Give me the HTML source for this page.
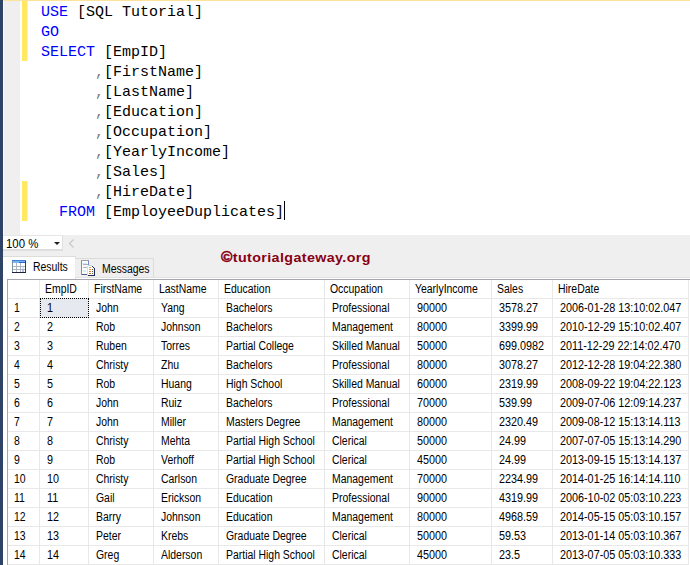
<!DOCTYPE html>
<html><head><meta charset="utf-8"><style>
*{margin:0;padding:0;box-sizing:border-box}
html,body{width:690px;height:565px;overflow:hidden;background:#fff}
body{position:relative;font-family:"Liberation Sans",sans-serif}
.abs{position:absolute}
#lstrip{left:0;top:0;width:3px;height:565px;background:#2f4367}
#wline{left:3px;top:1px;width:1px;height:234px;background:#fafafa}
#topline{left:3px;top:0;width:687px;height:1px;background:#fde39a}
#margin{left:4px;top:1px;width:16px;height:234px;background:#efefef}
.ybar{left:22px;width:5px;background:#ffe862;border-right:1px solid #fff3b0;width:6px}
.cl{position:absolute;left:41px;height:20px;margin-top:2px;font-family:"Liberation Mono",monospace;font-size:15px;line-height:20px;white-space:pre;color:#000}
.k{color:#0000ff}.g{color:#808080}
#cursor{left:284px;top:201px;width:1px;height:19px;background:#000}
#zoombar{left:3px;top:235px;width:687px;height:22px;background:#efefef}
#zoombox{left:3px;top:235px;width:60px;height:16px;background:#fff;border-top:1px solid #e6e6e6;border-right:1px solid #e0e0e0;border-bottom:2px solid #dedede}
#zoomtxt{left:6px;top:237px;font-size:12px;line-height:14px;color:#000;transform:scaleX(0.95);transform-origin:0 0;white-space:nowrap}
#ddarrow{left:54px;top:242px;width:0;height:0;border-left:3px solid transparent;border-right:3px solid transparent;border-top:3px solid #1e1e1e}
#panel{left:3px;top:257px;width:687px;height:308px;background:#fff}
#tabbar{left:75px;top:256px;width:615px;height:22px;background:#efefef;border-bottom:1px solid #e2e2e2}
#tabres{left:3px;top:256px;width:73px;height:23px;background:#fff;border-top:1px solid #dcdcdc;border-right:1px solid #dcdcdc}
#tabmsg{left:75px;top:258px;width:79px;height:20px;background:#efefef;border:1px solid #dcdcdc;border-left:none;border-bottom:1px solid #e2e2e2}
.tt{position:absolute;font-size:12px;line-height:14px;color:#000;transform:scaleX(0.87);transform-origin:0 0;white-space:nowrap}
#wm{left:221px;top:250px;font-weight:bold;font-size:13px;line-height:15px;letter-spacing:0.35px;color:#880014;white-space:nowrap;transform:scaleX(1.1);transform-origin:0 0}
#wm .cp{-webkit-text-stroke:0.5px #880014;font-size:14px}
#grid{left:7px;top:279px;width:683px;height:286px;background:#fff;border-left:1px solid #a6a6ae;border-top:1px solid #a6a6ae}
.vl{position:absolute;top:280px;width:1px;height:285px;background:#e8e8e8}
.hl{position:absolute;left:8px;width:681px;height:1px;background:#e8e8e8}
.c{position:absolute;font-size:12px;line-height:14px;color:#000;white-space:nowrap;transform:scaleX(0.87);transform-origin:0 0}
#sel{left:40px;top:298px;width:49px;height:20px;background:#e6eaf0}
</style></head><body>
<div class="abs" id="lstrip"></div><div class="abs" id="wline"></div>
<div class="abs" id="topline"></div>
<div class="abs" id="margin"></div>
<div class="abs ybar" style="top:1px;height:60px"></div>
<div class="abs ybar" style="top:181px;height:40px"></div>
<div class="cl" style="top:1px"><span class="k">USE</span>&nbsp;[SQL&nbsp;Tutorial]</div>
<div class="cl" style="top:21px"><span class="k">GO</span></div>
<div class="cl" style="top:41px"><span class="k">SELECT</span>&nbsp;[EmpID]</div>
<div class="cl" style="top:61px">&nbsp;&nbsp;&nbsp;&nbsp;&nbsp;&nbsp;<span class="g">,</span>[FirstName]</div>
<div class="cl" style="top:81px">&nbsp;&nbsp;&nbsp;&nbsp;&nbsp;&nbsp;<span class="g">,</span>[LastName]</div>
<div class="cl" style="top:101px">&nbsp;&nbsp;&nbsp;&nbsp;&nbsp;&nbsp;<span class="g">,</span>[Education]</div>
<div class="cl" style="top:121px">&nbsp;&nbsp;&nbsp;&nbsp;&nbsp;&nbsp;<span class="g">,</span>[Occupation]</div>
<div class="cl" style="top:141px">&nbsp;&nbsp;&nbsp;&nbsp;&nbsp;&nbsp;<span class="g">,</span>[YearlyIncome]</div>
<div class="cl" style="top:161px">&nbsp;&nbsp;&nbsp;&nbsp;&nbsp;&nbsp;<span class="g">,</span>[Sales]</div>
<div class="cl" style="top:181px">&nbsp;&nbsp;&nbsp;&nbsp;&nbsp;&nbsp;<span class="g">,</span>[HireDate]</div>
<div class="cl" style="top:201px">&nbsp;&nbsp;<span class="k">FROM</span>&nbsp;[EmployeeDuplicates]</div>
<div class="abs" id="cursor"></div>
<div class="abs" id="zoombar"></div><div class="abs" id="zoombox"></div><div class="abs" id="zoomtxt">100 %</div><div class="abs" id="ddarrow"></div>
<svg class="abs" style="left:68px;top:239px" width="7" height="9"><polyline points="5.5,0.5 1.5,4.5 5.5,8.5" fill="none" stroke="#c8c8c8" stroke-width="1.2"/></svg>
<div class="abs" id="panel"></div><div class="abs" id="tabbar"></div>
<div class="abs" id="tabres"></div><div class="abs" id="tabmsg"></div>
<svg class="abs" style="left:12px;top:260px" width="14" height="13" viewBox="0 0 14 13" shape-rendering="crispEdges">
<rect x="0" y="0" width="14" height="13" fill="#fff"/>
<rect x="0" y="0" width="14" height="1" fill="#3f7ddb"/>
<rect x="1" y="1" width="12" height="2" fill="#79b6f2"/>
<rect x="7" y="2" width="6" height="1" fill="#2e63c9"/>
<rect x="0" y="1" width="1" height="12" fill="#7c969c"/>
<rect x="13" y="1" width="1" height="12" fill="#2a3a7a"/>
<rect x="0" y="12" width="14" height="1" fill="#1c2240"/>
<rect x="1" y="6" width="12" height="1" fill="#aeb4c0"/>
<rect x="1" y="9" width="12" height="1" fill="#aeb4c0"/>
<rect x="4" y="3" width="1" height="9" fill="#aeb4c0"/>
<rect x="8" y="3" width="1" height="9" fill="#aeb4c0"/>
<rect x="10" y="7" width="2" height="2" fill="#c8f0f4"/>
<rect x="10" y="10" width="2" height="2" fill="#b8b8f8"/>
</svg>
<div class="tt" style="left:33px;top:260px">Results</div>
<svg class="abs" style="left:81px;top:260px" width="15" height="16" viewBox="0 0 15 16" shape-rendering="crispEdges">
<rect x="0" y="0" width="8" height="15" fill="#fdfdff"/>
<rect x="0" y="0" width="8" height="1" fill="#9aa0a8"/>
<rect x="0" y="1" width="1" height="14" fill="#7a86dc"/>
<rect x="7" y="1" width="1" height="6" fill="#8a80d0"/>
<rect x="1" y="14" width="6" height="1" fill="#505a80"/>
<rect x="2" y="4" width="5" height="1" fill="#a8b0b8"/>
<rect x="1" y="3" width="5" height="1" fill="#c8eef4"/>
<rect x="2" y="7" width="5" height="1" fill="#b0b4bc"/>
<rect x="2" y="10" width="3" height="2" fill="#d0f0f8"/>
<rect x="6" y="5" width="6" height="11" fill="#fff"/>
<rect x="7" y="5" width="4" height="1" fill="#a8e0f0"/>
<rect x="11" y="6" width="1" height="1" fill="#202a60"/>
<rect x="12" y="7" width="1" height="1" fill="#202a60"/>
<rect x="13" y="8" width="1" height="8" fill="#202a60"/>
<rect x="7" y="15" width="7" height="1" fill="#202a60"/>
<rect x="6" y="6" width="1" height="10" fill="#d8dcf0"/>
<rect x="8" y="7" width="2" height="1" fill="#f5a040"/>
<rect x="8" y="9" width="2" height="1" fill="#f09040"/>
<rect x="8" y="11" width="2" height="1" fill="#e87830"/>
<rect x="8" y="13" width="2" height="1" fill="#e06828"/>
<rect x="11" y="9" width="1" height="1" fill="#506838"/>
<rect x="11" y="11" width="1" height="1" fill="#506838"/>
<rect x="11" y="13" width="1" height="1" fill="#506838"/>
</svg>
<div class="tt" style="left:102px;top:262px">Messages</div>
<div class="abs" id="wm"><span class="cp">&copy;</span>tutorialgateway.org</div>
<div class="abs" id="grid"></div>
<div class="abs" id="sel"></div>
<div class="vl" style="left:39px"></div><div class="vl" style="left:88px"></div><div class="vl" style="left:153px"></div><div class="vl" style="left:218px"></div><div class="vl" style="left:324px"></div><div class="vl" style="left:409px"></div><div class="vl" style="left:491px"></div><div class="vl" style="left:552px"></div><div class="vl" style="left:688px"></div>
<div class="hl" style="top:298px"></div><div class="hl" style="top:317px"></div><div class="hl" style="top:336px"></div><div class="hl" style="top:355px"></div><div class="hl" style="top:374px"></div><div class="hl" style="top:393px"></div><div class="hl" style="top:412px"></div><div class="hl" style="top:431px"></div><div class="hl" style="top:450px"></div><div class="hl" style="top:469px"></div><div class="hl" style="top:488px"></div><div class="hl" style="top:507px"></div><div class="hl" style="top:526px"></div><div class="hl" style="top:545px"></div><div class="hl" style="top:564px"></div>
<div class="abs" style="left:40px;top:298px;width:49px;height:20px;border:1px dotted #000"></div>
<div class="c" style="left:44.5px;top:282px">EmpID</div><div class="c" style="left:93.5px;top:282px">FirstName</div><div class="c" style="left:158.5px;top:282px">LastName</div><div class="c" style="left:223.5px;top:282px">Education</div><div class="c" style="left:329.5px;top:282px">Occupation</div><div class="c" style="left:414.5px;top:282px">YearlyIncome</div><div class="c" style="left:496.5px;top:282px">Sales</div><div class="c" style="left:557.5px;top:282px">HireDate</div>
<div class="c" style="left:13.5px;top:301px">1</div><div class="c" style="left:46.5px;top:301px;transform:scaleX(0.9)">1</div><div class="c" style="left:95.5px;top:301px">John</div><div class="c" style="left:160.5px;top:301px">Yang</div><div class="c" style="left:225.5px;top:301px">Bachelors</div><div class="c" style="left:331.5px;top:301px">Professional</div><div class="c" style="left:416.5px;top:301px;transform:scaleX(0.9)">90000</div><div class="c" style="left:498.5px;top:301px;transform:scaleX(0.9)">3578.27</div><div class="c" style="left:559.5px;top:301px;transform:scaleX(0.9)">2006-01-28 13:10:02.047</div>
<div class="c" style="left:13.5px;top:320px">2</div><div class="c" style="left:46.5px;top:320px;transform:scaleX(0.9)">2</div><div class="c" style="left:95.5px;top:320px">Rob</div><div class="c" style="left:160.5px;top:320px">Johnson</div><div class="c" style="left:225.5px;top:320px">Bachelors</div><div class="c" style="left:331.5px;top:320px">Management</div><div class="c" style="left:416.5px;top:320px;transform:scaleX(0.9)">80000</div><div class="c" style="left:498.5px;top:320px;transform:scaleX(0.9)">3399.99</div><div class="c" style="left:559.5px;top:320px;transform:scaleX(0.9)">2010-12-29 15:10:02.407</div>
<div class="c" style="left:13.5px;top:339px">3</div><div class="c" style="left:46.5px;top:339px;transform:scaleX(0.9)">3</div><div class="c" style="left:95.5px;top:339px">Ruben</div><div class="c" style="left:160.5px;top:339px">Torres</div><div class="c" style="left:225.5px;top:339px">Partial College</div><div class="c" style="left:331.5px;top:339px">Skilled Manual</div><div class="c" style="left:416.5px;top:339px;transform:scaleX(0.9)">50000</div><div class="c" style="left:498.5px;top:339px;transform:scaleX(0.9)">699.0982</div><div class="c" style="left:559.5px;top:339px;transform:scaleX(0.9)">2011-12-29 22:14:02.470</div>
<div class="c" style="left:13.5px;top:358px">4</div><div class="c" style="left:46.5px;top:358px;transform:scaleX(0.9)">4</div><div class="c" style="left:95.5px;top:358px">Christy</div><div class="c" style="left:160.5px;top:358px">Zhu</div><div class="c" style="left:225.5px;top:358px">Bachelors</div><div class="c" style="left:331.5px;top:358px">Professional</div><div class="c" style="left:416.5px;top:358px;transform:scaleX(0.9)">80000</div><div class="c" style="left:498.5px;top:358px;transform:scaleX(0.9)">3078.27</div><div class="c" style="left:559.5px;top:358px;transform:scaleX(0.9)">2012-12-28 19:04:22.380</div>
<div class="c" style="left:13.5px;top:377px">5</div><div class="c" style="left:46.5px;top:377px;transform:scaleX(0.9)">5</div><div class="c" style="left:95.5px;top:377px">Rob</div><div class="c" style="left:160.5px;top:377px">Huang</div><div class="c" style="left:225.5px;top:377px">High School</div><div class="c" style="left:331.5px;top:377px">Skilled Manual</div><div class="c" style="left:416.5px;top:377px;transform:scaleX(0.9)">60000</div><div class="c" style="left:498.5px;top:377px;transform:scaleX(0.9)">2319.99</div><div class="c" style="left:559.5px;top:377px;transform:scaleX(0.9)">2008-09-22 19:04:22.123</div>
<div class="c" style="left:13.5px;top:396px">6</div><div class="c" style="left:46.5px;top:396px;transform:scaleX(0.9)">6</div><div class="c" style="left:95.5px;top:396px">John</div><div class="c" style="left:160.5px;top:396px">Ruiz</div><div class="c" style="left:225.5px;top:396px">Bachelors</div><div class="c" style="left:331.5px;top:396px">Professional</div><div class="c" style="left:416.5px;top:396px;transform:scaleX(0.9)">70000</div><div class="c" style="left:498.5px;top:396px;transform:scaleX(0.9)">539.99</div><div class="c" style="left:559.5px;top:396px;transform:scaleX(0.9)">2009-07-06 12:09:14.237</div>
<div class="c" style="left:13.5px;top:415px">7</div><div class="c" style="left:46.5px;top:415px;transform:scaleX(0.9)">7</div><div class="c" style="left:95.5px;top:415px">John</div><div class="c" style="left:160.5px;top:415px">Miller</div><div class="c" style="left:225.5px;top:415px">Masters Degree</div><div class="c" style="left:331.5px;top:415px">Management</div><div class="c" style="left:416.5px;top:415px;transform:scaleX(0.9)">80000</div><div class="c" style="left:498.5px;top:415px;transform:scaleX(0.9)">2320.49</div><div class="c" style="left:559.5px;top:415px;transform:scaleX(0.9)">2009-08-12 15:13:14.113</div>
<div class="c" style="left:13.5px;top:434px">8</div><div class="c" style="left:46.5px;top:434px;transform:scaleX(0.9)">8</div><div class="c" style="left:95.5px;top:434px">Christy</div><div class="c" style="left:160.5px;top:434px">Mehta</div><div class="c" style="left:225.5px;top:434px">Partial High School</div><div class="c" style="left:331.5px;top:434px">Clerical</div><div class="c" style="left:416.5px;top:434px;transform:scaleX(0.9)">50000</div><div class="c" style="left:498.5px;top:434px;transform:scaleX(0.9)">24.99</div><div class="c" style="left:559.5px;top:434px;transform:scaleX(0.9)">2007-07-05 15:13:14.290</div>
<div class="c" style="left:13.5px;top:453px">9</div><div class="c" style="left:46.5px;top:453px;transform:scaleX(0.9)">9</div><div class="c" style="left:95.5px;top:453px">Rob</div><div class="c" style="left:160.5px;top:453px">Verhoff</div><div class="c" style="left:225.5px;top:453px">Partial High School</div><div class="c" style="left:331.5px;top:453px">Clerical</div><div class="c" style="left:416.5px;top:453px;transform:scaleX(0.9)">45000</div><div class="c" style="left:498.5px;top:453px;transform:scaleX(0.9)">24.99</div><div class="c" style="left:559.5px;top:453px;transform:scaleX(0.9)">2013-09-15 15:13:14.137</div>
<div class="c" style="left:13.5px;top:472px">10</div><div class="c" style="left:46.5px;top:472px;transform:scaleX(0.9)">10</div><div class="c" style="left:95.5px;top:472px">Christy</div><div class="c" style="left:160.5px;top:472px">Carlson</div><div class="c" style="left:225.5px;top:472px">Graduate Degree</div><div class="c" style="left:331.5px;top:472px">Management</div><div class="c" style="left:416.5px;top:472px;transform:scaleX(0.9)">70000</div><div class="c" style="left:498.5px;top:472px;transform:scaleX(0.9)">2234.99</div><div class="c" style="left:559.5px;top:472px;transform:scaleX(0.9)">2014-01-25 16:14:14.110</div>
<div class="c" style="left:13.5px;top:491px">11</div><div class="c" style="left:46.5px;top:491px;transform:scaleX(0.9)">11</div><div class="c" style="left:95.5px;top:491px">Gail</div><div class="c" style="left:160.5px;top:491px">Erickson</div><div class="c" style="left:225.5px;top:491px">Education</div><div class="c" style="left:331.5px;top:491px">Professional</div><div class="c" style="left:416.5px;top:491px;transform:scaleX(0.9)">90000</div><div class="c" style="left:498.5px;top:491px;transform:scaleX(0.9)">4319.99</div><div class="c" style="left:559.5px;top:491px;transform:scaleX(0.9)">2006-10-02 05:03:10.223</div>
<div class="c" style="left:13.5px;top:510px">12</div><div class="c" style="left:46.5px;top:510px;transform:scaleX(0.9)">12</div><div class="c" style="left:95.5px;top:510px">Barry</div><div class="c" style="left:160.5px;top:510px">Johnson</div><div class="c" style="left:225.5px;top:510px">Education</div><div class="c" style="left:331.5px;top:510px">Management</div><div class="c" style="left:416.5px;top:510px;transform:scaleX(0.9)">80000</div><div class="c" style="left:498.5px;top:510px;transform:scaleX(0.9)">4968.59</div><div class="c" style="left:559.5px;top:510px;transform:scaleX(0.9)">2014-05-15 05:03:10.157</div>
<div class="c" style="left:13.5px;top:529px">13</div><div class="c" style="left:46.5px;top:529px;transform:scaleX(0.9)">13</div><div class="c" style="left:95.5px;top:529px">Peter</div><div class="c" style="left:160.5px;top:529px">Krebs</div><div class="c" style="left:225.5px;top:529px">Graduate Degree</div><div class="c" style="left:331.5px;top:529px">Clerical</div><div class="c" style="left:416.5px;top:529px;transform:scaleX(0.9)">50000</div><div class="c" style="left:498.5px;top:529px;transform:scaleX(0.9)">59.53</div><div class="c" style="left:559.5px;top:529px;transform:scaleX(0.9)">2013-01-14 05:03:10.367</div>
<div class="c" style="left:13.5px;top:548px">14</div><div class="c" style="left:46.5px;top:548px;transform:scaleX(0.9)">14</div><div class="c" style="left:95.5px;top:548px">Greg</div><div class="c" style="left:160.5px;top:548px">Alderson</div><div class="c" style="left:225.5px;top:548px">Partial High School</div><div class="c" style="left:331.5px;top:548px">Clerical</div><div class="c" style="left:416.5px;top:548px;transform:scaleX(0.9)">45000</div><div class="c" style="left:498.5px;top:548px;transform:scaleX(0.9)">23.5</div><div class="c" style="left:559.5px;top:548px;transform:scaleX(0.9)">2013-07-05 05:03:10.333</div>
</body></html>
